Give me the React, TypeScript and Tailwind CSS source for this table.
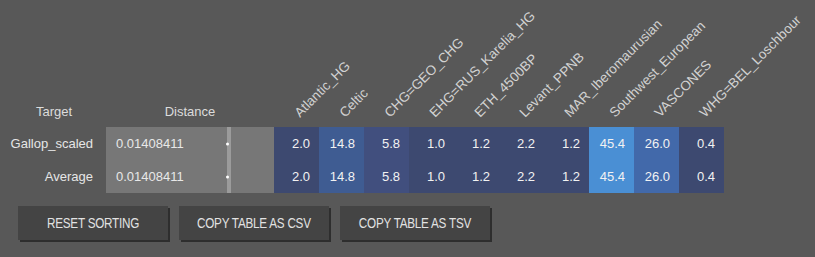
import React from 'react';

type Row = { target: string; distance: string; values: number[] };

const columns = [
  'Atlantic_HG',
  'Celtic',
  'CHG=GEO_CHG',
  'EHG=RUS_Karelia_HG',
  'ETH_4500BP',
  'Levant_PPNB',
  'MAR_Iberomaurusian',
  'Southwest_European',
  'VASCONES',
  'WHG=BEL_Loschbour',
];

const rows: Row[] = [
  { target: 'Gallop_scaled', distance: '0.01408411', values: [2.0, 14.8, 5.8, 1.0, 1.2, 2.2, 1.2, 45.4, 26.0, 0.4] },
  { target: 'Average', distance: '0.01408411', values: [2.0, 14.8, 5.8, 1.0, 1.2, 2.2, 1.2, 45.4, 26.0, 0.4] },
];

// heat colour per percentage bucket
const cellColor = (v: number) => {
  if (v >= 40) return 'bg-[#4a8fd4]';
  if (v >= 20) return 'bg-[#4269aa]';
  if (v >= 10) return 'bg-[#3f5c92]';
  if (v >= 5) return 'bg-[#414f7e]';
  return 'bg-[#3d4970]';
};

const buttons = ['Reset sorting', 'Copy table as CSV', 'Copy table as TSV'];

const App: React.FC = () => {
  return (
    <div className="w-[815px] h-[257px] bg-[#585858] font-['Liberation_Sans',Arial,sans-serif] text-[13px] overflow-hidden">
      <div>
        {/* header row */}
        <div className="flex h-[127px]">
          <div className="w-[106px] pl-[2px] flex items-end justify-center pb-[6px] text-[#dcdcdc]">
            <span>Target</span>
          </div>
          <div className="w-[168px] flex items-end justify-center pb-[6px] text-[#dcdcdc]">Distance</div>
          {columns.map((c) => (
            <div key={c} className="w-[45px] flex items-end pl-[28px] pb-[7px] text-[#d2d2d2] text-[13.5px]">
              <span className="block whitespace-nowrap origin-bottom-left -rotate-45 leading-[15px]">{c}</span>
            </div>
          ))}
        </div>

        {/* data rows */}
        {rows.map((r) => (
          <div key={r.target} className="flex h-[33px] items-stretch">
            <div className="w-[106px] flex items-center justify-end pr-[13px] text-[#e6e6e6]">{r.target}</div>
            <div className="w-[168px] bg-[#777777] flex items-center pl-[10px] text-[#e8e8e8]">
              <span className="w-[111px]">{r.distance}</span>
              <div className="relative w-[4px] self-stretch bg-[#9b9b9b]">
                <span className="absolute left-[-1px] top-1/2 -translate-y-1/2 w-[3px] h-[3px] rounded-full bg-white" />
              </div>
            </div>
            {r.values.map((v, i) => (
              <div
                key={i}
                className={`w-[45px] flex items-center justify-end pr-[9px] text-[#f2f2f2] ${cellColor(v)}`}
              >
                {v.toFixed(1)}
              </div>
            ))}
          </div>
        ))}
      </div>

      {/* actions */}
      <div className="flex gap-[11px] pl-[18px] mt-[13px]">
        {buttons.map((b) => (
          <button
            key={b}
            className="w-[150px] h-[34px] bg-[#444444] shadow-[2px_2px_0_#2e2e2e] text-[#e2e2e2] uppercase text-[15px] flex items-center justify-center"
          >
            <span className="inline-block whitespace-nowrap scale-x-[0.78] tracking-[-0.3px]">{b}</span>
          </button>
        ))}
      </div>
    </div>
  );
};

export default App;
